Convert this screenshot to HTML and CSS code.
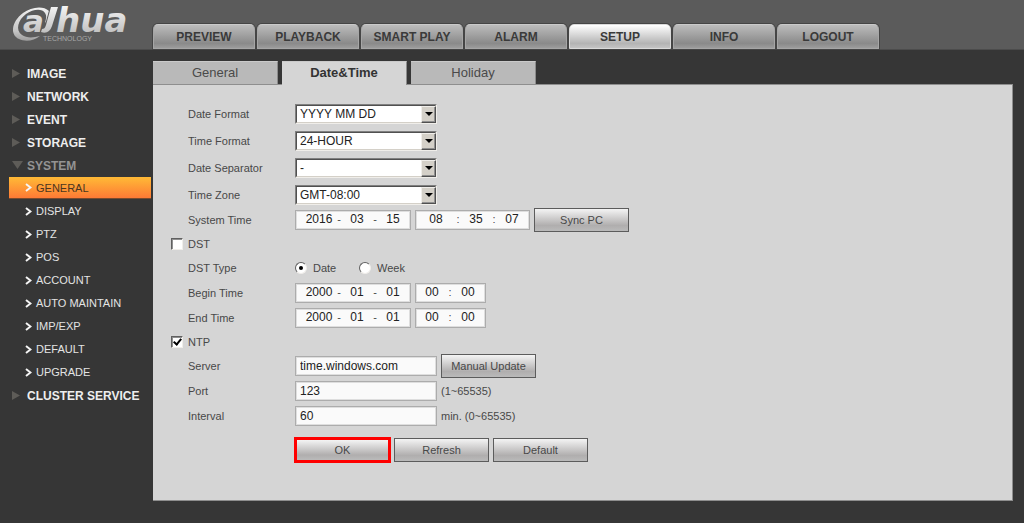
FILE: index.html
```html
<!DOCTYPE html>
<html lang="en">
<head>
    <meta charset="UTF-8">
    <meta name="viewport" content="width=device-width, initial-scale=1.0">
    <title>Setup - Date&amp;Time</title>
    <link rel="stylesheet" href="styles.css">
</head>
<body>
    <header class="header">
        <a class="logo" href="#">
            <svg width="135" height="46" viewBox="0 0 135 46" role="img" aria-label="Logo">
                <defs>
                    <linearGradient id="metal" gradientUnits="userSpaceOnUse" x1="0" y1="6" x2="0" y2="42">
                        <stop offset="0" stop-color="#f4f4f4"/>
                        <stop offset="0.7" stop-color="#c4c4c4"/>
                        <stop offset="1" stop-color="#999999"/>
                    </linearGradient>
                </defs>
                <g fill="url(#metal)">
                    <path d="M49 11 C43 5 31 7 23 13 C11 22 10 35 19 39 C25 42 34 41 40 36 C33 38 26 38 22 35 C15 30 18 20 26 14 C33 9 42 8 45 13 C47 16 46 19 45 23 L48 20 Z"/>
                    <text class="logo-name logo-small" x="23" y="32">a</text>
                    <path class="logo-stem" d="M51 7 L58 7 L52 26 C50 32 46 34 41 32 L42 29 C44 29 45 28 46 25 Z"/>
                    <text class="logo-name" x="56" y="32">hua</text>
                    <text class="logo-sub" x="43" y="41">TECHNOLOGY</text>
                </g>
            </svg>
        </a>
        <nav class="main-nav">
            <a href="#">PREVIEW</a>
            <a href="#">PLAYBACK</a>
            <a href="#">SMART PLAY</a>
            <a href="#">ALARM</a>
            <a href="#" class="active">SETUP</a>
            <a href="#">INFO</a>
            <a href="#">LOGOUT</a>
        </nav>
    </header>

    <div class="page">
        <ul class="menu">
            <li><a href="#"><svg width="11" height="11"><path d="M0 1 L8 5.500 L0 10 Z"/></svg>IMAGE</a></li>
            <li><a href="#"><svg width="11" height="11"><path d="M0 1 L8 5.500 L0 10 Z"/></svg>NETWORK</a></li>
            <li><a href="#"><svg width="11" height="11"><path d="M0 1 L8 5.500 L0 10 Z"/></svg>EVENT</a></li>
            <li><a href="#"><svg width="11" height="11"><path d="M0 1 L8 5.500 L0 10 Z"/></svg>STORAGE</a></li>
            <li>
                <a href="#" class="open"><svg width="11" height="11"><path d="M0 1 L11 1 L5.500 9 Z"/></svg>SYSTEM</a>
                <ul class="submenu">
                    <li><a href="#" class="active"><svg width="7" height="9"><path d="M1 1 L5.500 4.500 L1 8"/></svg>GENERAL</a></li>
                    <li><a href="#"><svg width="7" height="9"><path d="M1 1 L5.500 4.500 L1 8"/></svg>DISPLAY</a></li>
                    <li><a href="#"><svg width="7" height="9"><path d="M1 1 L5.500 4.500 L1 8"/></svg>PTZ</a></li>
                    <li><a href="#"><svg width="7" height="9"><path d="M1 1 L5.500 4.500 L1 8"/></svg>POS</a></li>
                    <li><a href="#"><svg width="7" height="9"><path d="M1 1 L5.500 4.500 L1 8"/></svg>ACCOUNT</a></li>
                    <li><a href="#"><svg width="7" height="9"><path d="M1 1 L5.500 4.500 L1 8"/></svg>AUTO MAINTAIN</a></li>
                    <li><a href="#"><svg width="7" height="9"><path d="M1 1 L5.500 4.500 L1 8"/></svg>IMP/EXP</a></li>
                    <li><a href="#"><svg width="7" height="9"><path d="M1 1 L5.500 4.500 L1 8"/></svg>DEFAULT</a></li>
                    <li><a href="#"><svg width="7" height="9"><path d="M1 1 L5.500 4.500 L1 8"/></svg>UPGRADE</a></li>
                </ul>
            </li>
            <li><a href="#"><svg width="11" height="11"><path d="M0 1 L8 5.500 L0 10 Z"/></svg>CLUSTER SERVICE</a></li>
        </ul>

        <main class="content">
            <nav class="tabs">
                <a href="#">General</a>
                <a href="#" class="active">Date&amp;Time</a>
                <a href="#">Holiday</a>
            </nav>
            <form class="panel">
                <div class="row row-select">
                    <label class="name" for="dateFormat">Date Format</label>
                    <div class="select">
                        <select id="dateFormat"><option>YYYY MM DD</option></select>
                        <span class="arrow"></span>
                    </div>
                </div>
                <div class="row row-select">
                    <label class="name" for="timeFormat">Time Format</label>
                    <div class="select">
                        <select id="timeFormat"><option>24-HOUR</option></select>
                        <span class="arrow"></span>
                    </div>
                </div>
                <div class="row row-select">
                    <label class="name" for="dateSeparator">Date Separator</label>
                    <div class="select">
                        <select id="dateSeparator"><option>-</option></select>
                        <span class="arrow"></span>
                    </div>
                </div>
                <div class="row row-select">
                    <label class="name" for="timeZone">Time Zone</label>
                    <div class="select">
                        <select id="timeZone"><option>GMT-08:00</option></select>
                        <span class="arrow"></span>
                    </div>
                </div>
                <div class="row row-short">
                    <label class="name" for="sysYear">System Time</label>
                    <div class="parts date">
                        <input type="text" id="sysYear" class="year" value="2016"><span>-</span><input type="text" aria-label="Month" value="03"><span>-</span><input type="text" aria-label="Day" value="15">
                    </div>
                    <div class="parts time">
                        <input type="text" class="hour" aria-label="Hour" value="08"><span>:</span><input type="text" aria-label="Minute" value="35"><span>:</span><input type="text" aria-label="Second" value="07">
                    </div>
                    <button type="button">Sync PC</button>
                </div>
                <div class="row row-short">
                    <input type="checkbox" id="dst">
                    <label for="dst">DST</label>
                </div>
                <div class="row row-short">
                    <span class="name">DST Type</span>
                    <input type="radio" name="dstType" id="dstDate" checked>
                    <label class="choice" for="dstDate">Date</label>
                    <input type="radio" name="dstType" id="dstWeek">
                    <label class="choice" for="dstWeek">Week</label>
                </div>
                <div class="row">
                    <label class="name" for="beginYear">Begin Time</label>
                    <div class="parts date">
                        <input type="text" id="beginYear" class="year" value="2000"><span>-</span><input type="text" aria-label="Begin month" value="01"><span>-</span><input type="text" aria-label="Begin day" value="01">
                    </div>
                    <div class="parts time-short">
                        <input type="text" aria-label="Begin hour" value="00"><span>:</span><input type="text" aria-label="Begin minute" value="00">
                    </div>
                </div>
                <div class="row">
                    <label class="name" for="endYear">End Time</label>
                    <div class="parts date">
                        <input type="text" id="endYear" class="year" value="2000"><span>-</span><input type="text" aria-label="End month" value="01"><span>-</span><input type="text" aria-label="End day" value="01">
                    </div>
                    <div class="parts time-short">
                        <input type="text" aria-label="End hour" value="00"><span>:</span><input type="text" aria-label="End minute" value="00">
                    </div>
                </div>
                <div class="row row-short">
                    <input type="checkbox" id="ntp" checked>
                    <label for="ntp">NTP</label>
                </div>
                <div class="row row-short">
                    <label class="name" for="server">Server</label>
                    <input type="text" class="text" id="server" value="time.windows.com">
                    <button type="button">Manual Update</button>
                </div>
                <div class="row">
                    <label class="name" for="port">Port</label>
                    <input type="text" class="text" id="port" value="123">
                    <span>(1~65535)</span>
                </div>
                <div class="row">
                    <label class="name" for="interval">Interval</label>
                    <input type="text" class="text" id="interval" value="60">
                    <span>min. (0~65535)</span>
                </div>
                <div class="actions">
                    <button type="button" class="marked">OK</button>
                    <button type="button">Refresh</button>
                    <button type="button">Default</button>
                </div>
            </form>
        </main>
    </div>
</body>
</html>
```
FILE: styles.css
```css
* {
    box-sizing: border-box;
}
body {
    font-family: "Liberation Sans", Arial, sans-serif;
    font-size: 11px;
    background-color: #363636;
    color: #484848;
    margin: 0;
}
a {
    color: inherit;
    text-decoration: none;
}
ul {
    list-style: none;
    margin: 0;
    padding: 0;
}

/* Header */
.header {
    display: flex;
    align-items: flex-end;
    height: 50px;
    background-color: #5b5b5b;
    border-bottom: 1px solid #4c4c4c;
}
.logo {
    width: 153px;
    height: 49px;
}
.logo svg {
    display: block;
}
.logo-name {
    font-family: "DejaVu Sans", sans-serif;
    font-size: 34px;
    font-weight: bold;
    font-style: italic;
}
.logo-small {
    font-size: 31px;
}
.logo-stem {
    stroke: #5b5b5b;
    stroke-width: 2;
    paint-order: stroke;
}
.logo-sub {
    font-size: 7px;
    fill: #a8a8a8;
}
.main-nav {
    display: flex;
    gap: 2px;
}
.main-nav a {
    width: 102px;
    height: 25px;
    line-height: 24px;
    font-size: 12px;
    font-weight: bold;
    text-align: center;
    color: #3a3a3a;
    background: linear-gradient(#bcbcbc, #8a8a8a 80%, #9c9c9c);
    border: 1px solid #a6a6a6;
    border-top-color: #cacaca;
    border-radius: 5px 5px 0 0;
    box-shadow: 0 0 0 1px #454545;
}
.main-nav a.active {
    background: linear-gradient(#ffffff, #b4b4b4 80%, #c4c4c4);
    border-color: #dadada;
}

.page {
    display: flex;
}

/* Left menu */
.menu {
    width: 153px;
    flex-shrink: 0;
    padding-top: 12px;
    font-size: 12px;
    font-weight: bold;
    color: #eeeeee;
}
.menu a {
    display: flex;
    align-items: center;
    gap: 4px;
    height: 23px;
    padding-left: 12px;
}
.menu svg {
    fill: #5e5c58;
}
.menu .open {
    color: #939393;
}
.submenu {
    margin: 0 2px 1px 9px;
    font-size: 11px;
    font-weight: normal;
    color: #e4e4e4;
}
.submenu a {
    height: 22px;
    margin-bottom: 1px;
    padding-left: 16px;
}
.submenu svg {
    fill: none;
    stroke: #f4f4f4;
    stroke-width: 2;
}
.submenu .active {
    color: #4a3620;
    background: linear-gradient(#ffba36, #fe7a35);
    border-bottom: 1px solid #7a4a2c;
}

/* Tabs */
.content {
    flex: 1;
    padding: 11px 11px 22px 0;
}
.tabs {
    display: flex;
    gap: 4px;
}
.tabs a {
    width: 125px;
    height: 23px;
    line-height: 21px;
    font-size: 13px;
    text-align: center;
    color: #4a4a4a;
    background-color: #b9b9b9;
    border-top: 1px solid #cacaca;
    border-right: 1px solid #8c8c8c;
}
.tabs a.active {
    height: 24px;
    margin-bottom: -1px;
    font-weight: bold;
    color: #333333;
    background-color: #d5d5d5;
}

/* Form */
.panel {
    padding: 15px 18px 38px;
    background-color: #d5d5d5;
    border: 1px solid #8e8e8e;
    border-left: none;
}
.row {
    display: flex;
    align-items: center;
    gap: 4px;
    height: 25px;
}
.row-select {
    height: 27px;
}
.row-short {
    height: 24px;
}
.name {
    width: 103px;
    margin-left: 17px;
}
.choice {
    width: 42px;
    margin-left: 2px;
}
button {
    width: 95px;
    height: 24px;
    padding: 0;
    font-family: inherit;
    font-size: 11px;
    color: #484848;
    background: linear-gradient(#f4f4f4, #b0aeae 75%, #bababa);
    border: 1px solid #5c5c5c;
}
.marked {
    border: 2px solid #ff0000;
    box-shadow: 0 0 0 1px #ff0000;
}
.actions {
    display: flex;
    gap: 4px;
    margin: 10px 0 0 124px;
}
.text {
    width: 142px;
    height: 20px;
    padding: 0 4px;
    font-family: inherit;
    font-size: 12px;
    color: #222222;
    background-color: #fafafa;
    border: 1px solid #acacac;
    box-shadow: inset 0 0 0 1px #dedede;
}

/* Select box with a raised arrow button */
.select {
    position: relative;
    width: 142px;
    height: 20px;
    border: 1px solid #808080;
    border-right-color: #f0eeea;
    border-bottom-color: #f0eeea;
}
.select select {
    display: block;
    appearance: none;
    width: 100%;
    height: 18px;
    padding: 0 16px 0 3px;
    font-family: inherit;
    font-size: 12px;
    color: #222222;
    background-color: #ffffff;
    border: 1px solid #505050;
    border-right-color: #d4d0c8;
    border-bottom-color: #d4d0c8;
    border-radius: 0;
}
.arrow {
    position: absolute;
    top: 1px;
    right: 0;
    width: 15px;
    height: 17px;
    display: flex;
    align-items: center;
    justify-content: center;
    background-color: #d4d0c8;
    border: 1px solid #f0eeea;
    border-right: 1px solid #505050;
    border-bottom: 1px solid #505050;
    box-shadow: inset -1px -1px 0 #909090;
    pointer-events: none;
}
.arrow::after {
    content: "";
    border: 4px solid transparent;
    border-top-color: #000000;
    border-bottom: none;
}

/* Date and time boxes made of several fields */
.parts {
    display: flex;
    align-items: center;
    height: 20px;
    padding: 0 2px 2px;
    background-color: #fafafa;
    border: 1px solid #acacac;
    box-shadow: inset 0 0 0 1px #dedede;
}
.parts input {
    width: 28px;
    padding: 0;
    font-family: inherit;
    font-size: 12px;
    text-align: center;
    color: #222222;
    background: none;
    border: none;
}
.parts span {
    width: 8px;
    text-align: center;
}
.date {
    width: 116px;
    padding-left: 7px;
}
.parts .year {
    width: 32px;
}
.time {
    width: 115px;
}
.parts .hour {
    width: 36px;
}
.time-short {
    width: 71px;
}

input[type="checkbox"] {
    appearance: none;
    width: 12px;
    height: 12px;
    margin: 0 1px 0 0;
    display: flex;
    align-items: center;
    justify-content: center;
    background-color: #ffffff;
    border: 1px solid #606060;
    border-right-color: #f0eeea;
    border-bottom-color: #f0eeea;
    box-shadow: inset 1px 1px 0 #909090;
}
input[type="checkbox"]:checked::after {
    content: "";
    width: 3px;
    height: 6px;
    margin-bottom: 2px;
    border: solid #000000;
    border-width: 0 2px 2px 0;
    transform: rotate(40deg);
}
input[type="radio"] {
    appearance: none;
    width: 12px;
    height: 12px;
    margin: 0;
    display: flex;
    align-items: center;
    justify-content: center;
    background-color: #ffffff;
    border: 1px solid #606060;
    border-right-color: #f0eeea;
    border-bottom-color: #f0eeea;
    border-radius: 50%;
}
input[type="radio"]:checked::after {
    content: "";
    width: 4px;
    height: 4px;
    background-color: #000000;
    border-radius: 50%;
}
```
